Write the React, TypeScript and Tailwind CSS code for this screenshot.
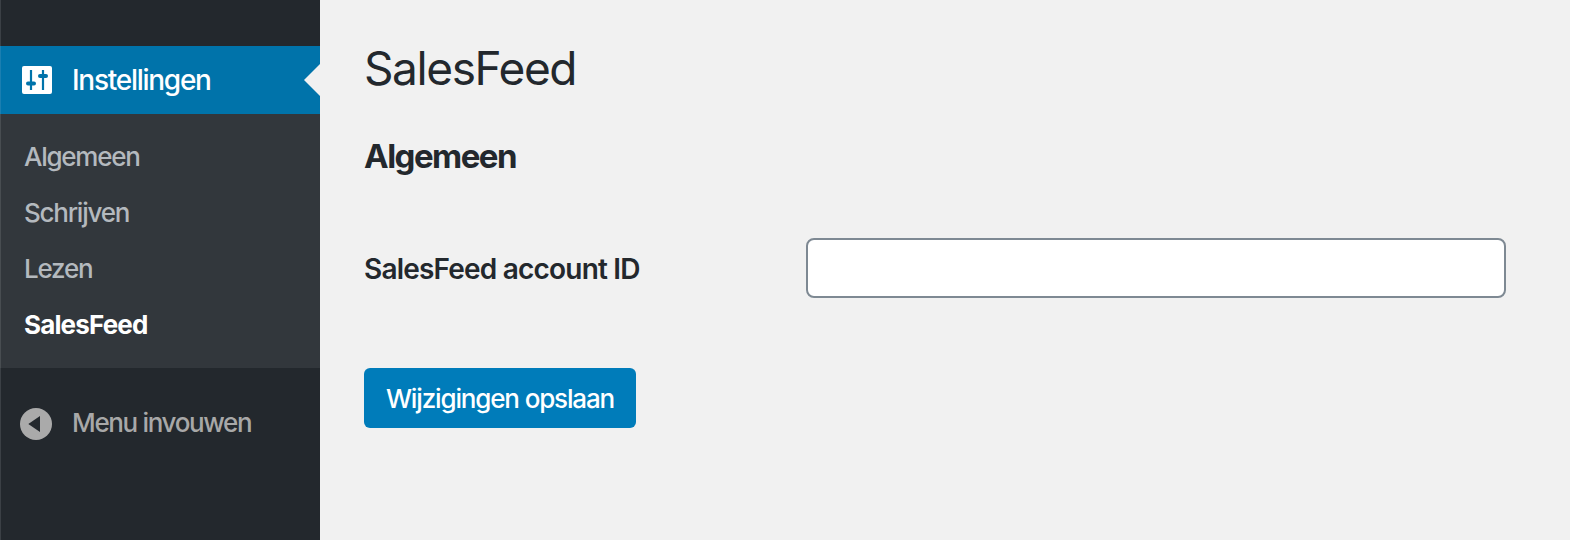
export default function App() {
  return (
    <div className="flex h-[540px] w-[1570px] overflow-hidden bg-[#f1f1f1] font-['Inter',sans-serif] font-medium text-[#23282d]">
      <nav className="w-[320px] shrink-0 bg-[#23282d] pt-[46px] shadow-[inset_1px_0_0_#3b4045]">
        <a className="flex h-[68px] items-center border-l border-[#1b7fb1] bg-[#0073aa] text-white">
          <svg className="ml-[21px] h-7 w-[30px]" viewBox="0 0 30 28">
            <rect width="30" height="28" rx="2" fill="#fff" />
            <path d="M9 4v20M21 4v20" stroke="#0073aa" strokeWidth="2.2" />
            <rect x="4" y="15.5" width="10" height="4" rx="2" fill="#0073aa" />
            <rect x="16" y="8" width="10" height="4" rx="2" fill="#0073aa" />
          </svg>
          <span className="ml-5 text-[28px] tracking-[-1.27px]">Instellingen</span>
          <svg className="ml-auto h-8 w-4" viewBox="0 0 16 32"><path d="M16 0v32L0 16z" fill="#f1f1f1" /></svg>
        </a>
        <ul className="h-[254px] border-l border-[#484d51] bg-[#32373c] pt-[15px] pl-[23px] text-[26px] leading-[56px] tracking-[-1.25px] text-[#b4b9be]">
          <li>Algemeen</li>
          <li>Schrijven</li>
          <li>Lezen</li>
          <li className="font-bold tracking-[-0.85px] text-white">SalesFeed</li>
        </ul>
        <div className="mt-[22px] flex h-[68px] items-center">
          <svg className="ml-5 h-8 w-8" viewBox="0 0 32 32"><circle cx="16" cy="16" r="16" fill="#aaa" /><path d="M20 8v16L8.3 16z" fill="#23282d" /></svg>
          <span className="ml-5 pb-[3px] text-[26px] tracking-[-1.35px] text-[#a8a8a8]">Menu invouwen</span>
        </div>
      </nav>
      <main className="pl-11">
        <h1 className="mt-[38px] text-[46px] leading-[60px] font-normal tracking-[-1.4px]">SalesFeed</h1>
        <h2 className="mt-[34px] text-[33px] leading-[48px] font-bold tracking-[-1.5px]">Algemeen</h2>
        <div className="mt-[58px] flex h-[60px] items-center">
          <label className="w-[442px] pt-px text-[28px] font-semibold tracking-[-0.8px]">SalesFeed account ID</label>
          <input className="h-[60px] w-[700px] rounded-lg border-2 border-[#7e8993] bg-white" />
        </div>
        <button className="mt-[70px] h-[60px] w-[272px] rounded-md bg-[#007cba] pt-px text-[26px] tracking-[-1.15px] text-white">Wijzigingen opslaan</button>
      </main>
    </div>
  );
}
